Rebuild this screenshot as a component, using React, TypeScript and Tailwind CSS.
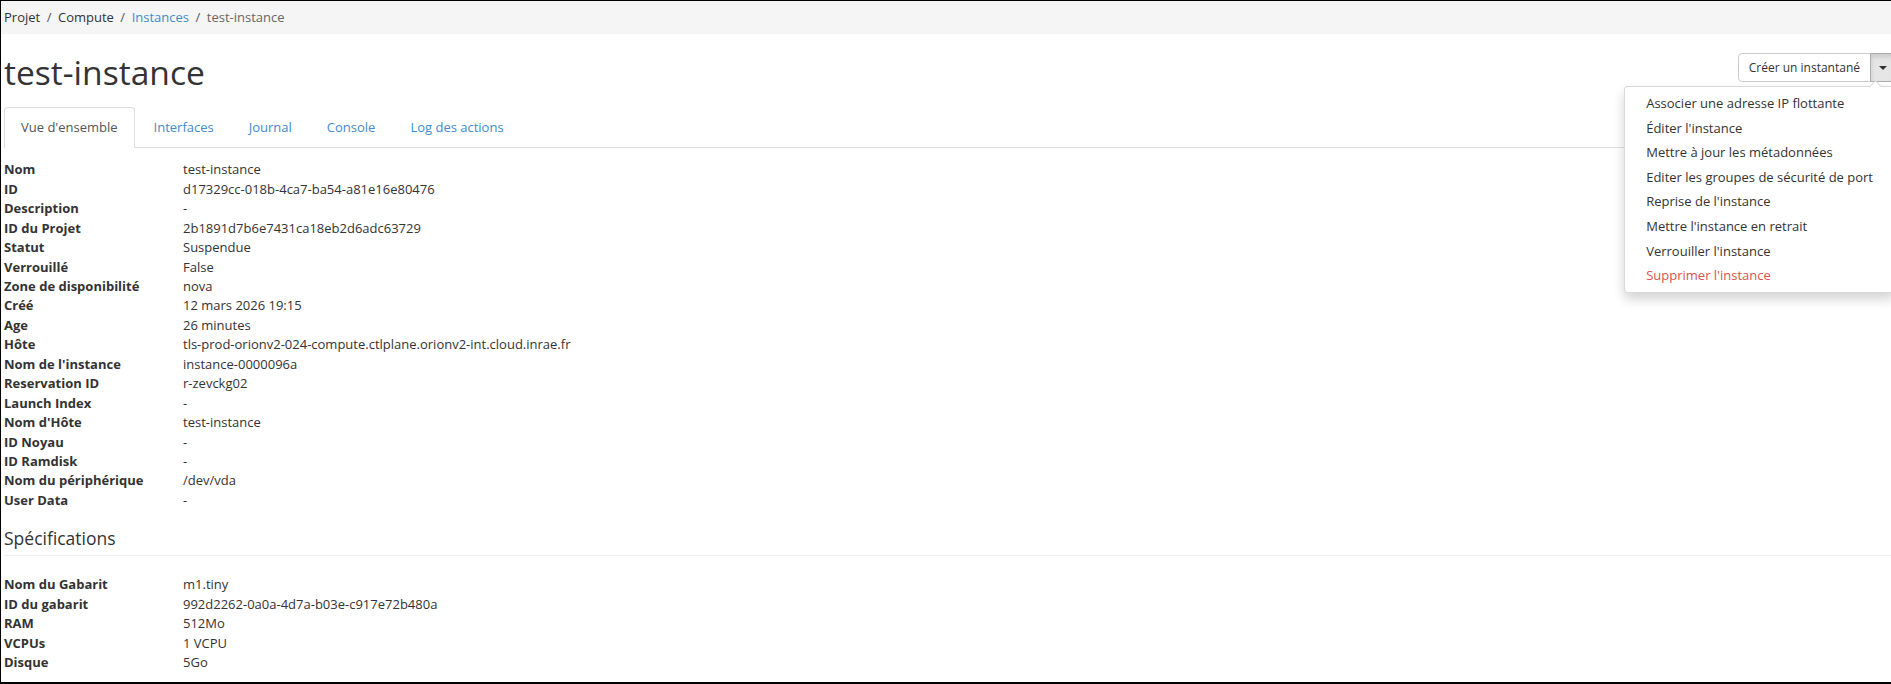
import { FC } from 'react';

const details: [string, string][] = [
    ['Nom', 'test-instance'],
    ['ID', 'd17329cc-018b-4ca7-ba54-a81e16e80476'],
    ['Description', '-'],
    ['ID du Projet', '2b1891d7b6e7431ca18eb2d6adc63729'],
    ['Statut', 'Suspendue'],
    ['Verrouillé', 'False'],
    ['Zone de disponibilité', 'nova'],
    ['Créé', '12 mars 2026 19:15'],
    ['Age', '26 minutes'],
    ['Hôte', 'tls-prod-orionv2-024-compute.ctlplane.orionv2-int.cloud.inrae.fr'],
    ['Nom de l\'instance', 'instance-0000096a'],
    ['Reservation ID', 'r-zevckg02'],
    ['Launch Index', '-'],
    ['Nom d\'Hôte', 'test-instance'],
    ['ID Noyau', '-'],
    ['ID Ramdisk', '-'],
    ['Nom du périphérique', '/dev/vda'],
    ['User Data', '-'],
];

const specs: [string, string][] = [
    ['Nom du Gabarit', 'm1.tiny'],
    ['ID du gabarit', '992d2262-0a0a-4d7a-b03e-c917e72b480a'],
    ['RAM', '512Mo'],
    ['VCPUs', '1 VCPU'],
    ['Disque', '5Go'],
];

const actions = [
    'Associer une adresse IP flottante',
    'Éditer l\'instance',
    'Mettre à jour les métadonnées',
    'Editer les groupes de sécurité de port',
    'Reprise de l\'instance',
    'Mettre l\'instance en retrait',
    'Verrouiller l\'instance',
];

const tabs = ['Interfaces', 'Journal', 'Console', 'Log des actions'];

const DetailList: FC<{ rows: [string, string][] }> = ({ rows }) => (
    <dl className="grid grid-cols-[179px_1fr]">
        {rows.map(([label, value]) => (
            <div key={label} className="contents">
                <dt className="font-bold h-[19.44px] whitespace-nowrap">{label}</dt>
                <dd className="h-[19.44px] whitespace-nowrap">{value}</dd>
            </div>
        ))}
    </dl>
);

const App: FC = () => {
    return (
        <div className="w-[1891px] h-[684px] overflow-hidden border-l border-t border-b-2 border-black bg-white font-['Open_Sans',sans-serif] text-[13px] leading-[19.4px] text-[#333]">
            <div className="w-[1898px]">
                {/* breadcrumb */}
                <div className="h-[33px] bg-[#f5f5f5] pl-[3px] flex items-center">
                    <span>Projet</span>
                    <span className="px-[6.5px] text-[#555]">/</span>
                    <span>Compute</span>
                    <span className="px-[6.5px] text-[#555]">/</span>
                    <span className="text-[#428bca]">Instances</span>
                    <span className="px-[6.5px] text-[#555]">/</span>
                    <span className="text-[#666]">test-instance</span>
                </div>

                <div className="pl-[3px] pr-[4px]">
                    <div className="flex justify-between items-start pt-[19px]">
                        <h1 className="text-[33.6px] leading-[38px] font-normal">test-instance</h1>
                        <div className="relative flex h-[29px]">
                            <button className="h-[29px] px-[10px] border border-[#ccc] rounded-l-[4px] bg-white text-[12px] text-[#333] whitespace-nowrap">
                                Créer un instantané
                            </button>
                            <button className="h-[29px] w-[25px] -ml-px border border-[#adadad] rounded-r-[4px] bg-[#e6e6e6] flex items-center justify-center shadow-[inset_0_3px_5px_rgba(0,0,0,0.125)]">
                                <span className="w-0 h-0 border-l-[4px] border-r-[4px] border-t-[4px] border-l-transparent border-r-transparent border-t-[#333]" />
                            </button>
                            {/* dropdown menu */}
                            <div className="absolute right-0 top-[33px] z-10 bg-white border border-[rgba(0,0,0,0.15)] rounded-[4px] shadow-[0_6px_12px_rgba(0,0,0,0.175)] py-[4px] whitespace-nowrap">
                                <div className="absolute -top-[5px] right-[14px] w-[9px] h-[9px] rotate-45 bg-white border-l border-t border-[rgba(0,0,0,0.15)]" />
                                {actions.map((a) => (
                                    <div key={a} className="px-[21px] h-[24.6px] leading-[24.6px] text-[#333]">{a}</div>
                                ))}
                                <div className="px-[21px] h-[24.6px] leading-[24.6px] text-[#d9534f]">Supprimer l'instance</div>
                            </div>
                        </div>
                    </div>

                    {/* tabs */}
                    <ul className="flex mt-[16px] border-b border-[#ddd]">
                        <li className="-mb-px mr-[2px]">
                            <div className="px-[16px] py-[10px] border border-[#ddd] border-b-white rounded-t-[4px] bg-white text-[#555]">
                                Vue d'ensemble
                            </div>
                        </li>
                        {tabs.map((t) => (
                            <li key={t} className="-mb-px mr-[1px]">
                                <div className="px-[16px] py-[10px] border border-transparent text-[#428bca]">{t}</div>
                            </li>
                        ))}
                    </ul>

                    <div className="mt-[12px]">
                        <DetailList rows={details} />
                    </div>

                    <div className="mt-[16px] pb-[5px] border-b border-[#eee] -mr-[4px]">
                        <h4 className="text-[17.5px] leading-[24px] font-normal">Spécifications</h4>
                    </div>

                    <div className="mt-[19px]">
                        <DetailList rows={specs} />
                    </div>
                </div>
            </div>
        </div>
    );
};

export default App;
